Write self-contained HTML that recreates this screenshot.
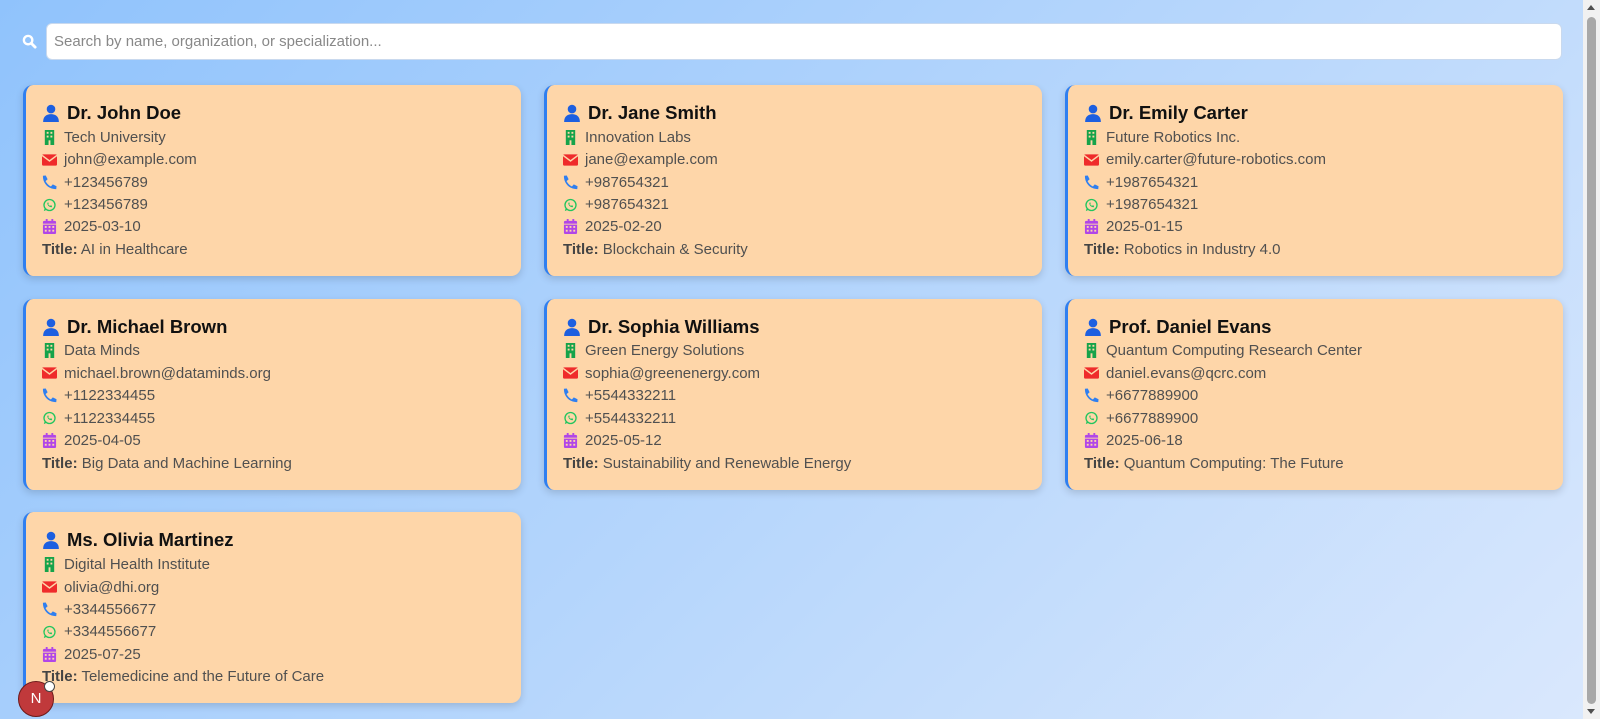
<!DOCTYPE html>
<html><head><style>
*{box-sizing:border-box;margin:0;padding:0}
html,body{width:1600px;height:719px;overflow:hidden}
body{font-family:"Liberation Sans",Arial,sans-serif;background:linear-gradient(135deg,#90c3fc 0%,#b4d5fc 50%,#dae8fd 100%);position:relative}
.sb{position:absolute;right:0;top:0;width:17px;height:719px;background:#f1f1f1}
.sb .th{position:absolute;left:4px;top:17px;width:9px;height:687px;background:#a8a8a8;border-radius:5px}
.sb .a{position:absolute;left:4px;width:0;height:0;border-left:4.5px solid transparent;border-right:4.5px solid transparent}
.search{position:absolute;left:22px;top:23px;width:1540px;height:37px}
.search svg{position:absolute;left:0;top:11px}
.search .in{position:absolute;left:24px;top:0;width:1516px;height:37px;background:#fff;border-radius:6px;border:1px solid #c9d9ee;color:#888;font-size:15px;line-height:35px;padding-left:7px}
.card{position:absolute;width:498px;height:191px;background:#fed6a9;border-radius:10px;border-left:3px solid #2f7ff0;box-shadow:0 3px 8px rgba(0,0,0,.15);padding:15px 0 0 16px;color:#505050;font-size:15px}
.nm{font-size:18.5px;font-weight:bold;color:#111;height:26px;display:flex;align-items:center;gap:7px}
.ln{height:22.45px;display:flex;align-items:center;gap:7px}
.ln svg{width:15px;flex:none}
.t b{color:#444}
.n{position:absolute;left:18px;top:681px;width:36px;height:36px;border-radius:50%;background:#c0393b;border:1px solid #6d1a1a;color:#fff;font-size:15px;text-align:center;line-height:34px}
.n:after{content:"";position:absolute;right:-2px;top:-1px;width:9px;height:9px;border-radius:50%;background:#fff;border:1px solid #444}
</style></head><body>
<div class="search"><svg width="15" height="15" viewBox="0 0 16 16"><circle cx="6.5" cy="6.5" r="4.5" fill="none" stroke="#fff" stroke-width="2.5"/><path d="M10 10l4 4" stroke="#fff" stroke-width="3" stroke-linecap="round"/></svg><div class="in">Search by name, organization, or specialization...</div></div>
<div id="c"></div>
<div class="n">N</div>
<div class="sb"><div class="a" style="top:5px;border-bottom:5px solid #505050"></div><div class="th"></div><div class="a" style="bottom:5px;border-top:5px solid #505050"></div></div>
<script>
var d=[["Dr. John Doe","Tech University","john@example.com","+123456789","2025-03-10","AI in Healthcare"],
["Dr. Jane Smith","Innovation Labs","jane@example.com","+987654321","2025-02-20","Blockchain &amp; Security"],
["Dr. Emily Carter","Future Robotics Inc.","emily.carter@future-robotics.com","+1987654321","2025-01-15","Robotics in Industry 4.0"],
["Dr. Michael Brown","Data Minds","michael.brown@dataminds.org","+1122334455","2025-04-05","Big Data and Machine Learning"],
["Dr. Sophia Williams","Green Energy Solutions","sophia@greenenergy.com","+5544332211","2025-05-12","Sustainability and Renewable Energy"],
["Prof. Daniel Evans","Quantum Computing Research Center","daniel.evans@qcrc.com","+6677889900","2025-06-18","Quantum Computing: The Future"],
["Ms. Olivia Martinez","Digital Health Institute","olivia@dhi.org","+3344556677","2025-07-25","Telemedicine and the Future of Care"]];
var user='<svg width="18" height="18" viewBox="0 0 16 16"><circle cx="8" cy="4.5" r="3.8" fill="#1d5fe0"/><path d="M1 16c0-5 3-7 7-7s7 2 7 7z" fill="#1d5fe0"/></svg>';
var bld='<svg height="15" viewBox="0 0 12 16"><rect x="1" y="0" width="10" height="16" fill="#16a34a"/><g fill="#fed6a9"><rect x="3" y="2" width="2" height="2"/><rect x="7" y="2" width="2" height="2"/><rect x="3" y="6" width="2" height="2"/><rect x="7" y="6" width="2" height="2"/><rect x="5" y="11" width="2" height="5"/></g></svg>';
var mail='<svg height="12" viewBox="0 0 16 12"><rect width="16" height="12" rx="1.5" fill="#ef2b2b"/><path d="M0 1l8 6 8-6" stroke="#fed6a9" stroke-width="1.5" fill="none"/></svg>';
var ph='<svg height="15" viewBox="0 0 16 16"><path d="M15.5 12l-4-2-2 2.2C7 11 5 9 3.8 6.5L6 4.5 4 .5 1 .8C.7 9 7 15.3 15.2 15z" fill="#2f7ff0"/></svg>';
var wa='<svg height="14" viewBox="0 0 16 16"><circle cx="8" cy="8" r="6.3" fill="none" stroke="#22c55e" stroke-width="1.5"/><path d="M1.5 15l1-3.5 2 2z" fill="#22c55e"/><path d="M5.5 5.5c0 3 2 5 5 5l.5-1.5-1.5-.7-.8.7c-1-.5-1.8-1.3-2.2-2.2l.7-.8L6.5 5z" fill="#22c55e"/></svg>';
var cal='<svg height="15" viewBox="0 0 14 16"><rect x="0" y="2" width="14" height="14" rx="1.5" fill="#b146e8"/><rect x="3" y="0" width="2" height="4" fill="#b146e8"/><rect x="9" y="0" width="2" height="4" fill="#b146e8"/><g fill="#fed6a9"><rect x="0" y="5" width="14" height="1"/><rect x="2" y="7.5" width="2" height="2"/><rect x="6" y="7.5" width="2" height="2"/><rect x="10" y="7.5" width="2" height="2"/><rect x="2" y="11.5" width="2" height="2"/><rect x="6" y="11.5" width="2" height="2"/><rect x="10" y="11.5" width="2" height="2"/></g></svg>';
var h='';
d.forEach(function(r,i){var x=23+(i%3)*521,y=85+Math.floor(i/3)*213.7;
h+='<div class="card" style="left:'+x+'px;top:'+y+'px"><div class="nm">'+user+r[0]+'</div>'+
'<div class="ln">'+bld+r[1]+'</div><div class="ln">'+mail+r[2]+'</div><div class="ln">'+ph+r[3]+'</div><div class="ln">'+wa+r[3]+'</div><div class="ln">'+cal+r[4]+'</div><div class="ln t"><span><b>Title:</b> '+r[5]+'</span></div></div>';});
document.getElementById('c').innerHTML=h;
</script>
</body></html>
